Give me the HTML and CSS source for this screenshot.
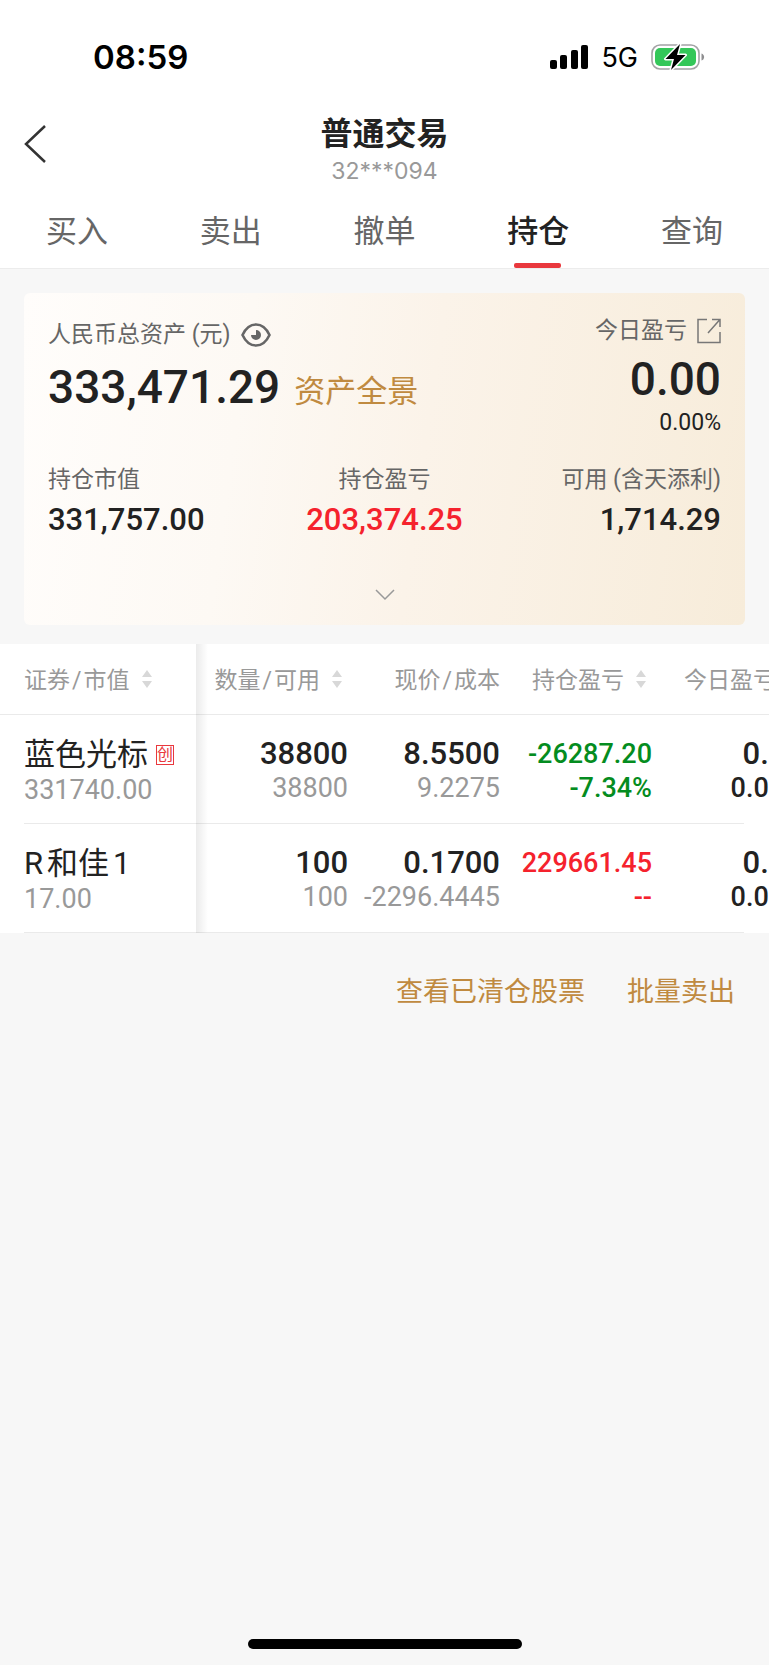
FILE: index.html
```html
<!DOCTYPE html>
<html lang="zh-CN">
<head>
  <meta charset="UTF-8">
  <meta name="viewport" content="width=device-width, initial-scale=1.0">
  <title>普通交易</title>
  <link rel="stylesheet" href="styles.css">
</head>
<body>
  <header class="top">
    <div class="status-bar">
      <span class="time">08:59</span>
      <div class="status-right">
        <svg class="signal" width="38" height="24" viewBox="0 0 38 24">
          <rect x="0" y="15" width="7" height="9" rx="2"/>
          <rect x="10" y="10" width="7" height="14" rx="2"/>
          <rect x="21" y="5" width="7" height="19" rx="2"/>
          <rect x="31" y="0" width="7" height="24" rx="2"/>
        </svg>
        <span class="network">5G</span>
        <svg class="battery" width="54" height="28" viewBox="0 0 54 28">
          <rect x="1" y="2" width="47" height="24" rx="8" fill="none" stroke="#a3a3a5" stroke-width="1.6"/>
          <rect x="4" y="5" width="41" height="18" rx="5" fill="#34c759"/>
          <path d="M50.500 10.500c3.500 1 3.500 6 0 7z" fill="#8e8e90"/>
          <path d="M29 1L14.500 16H23l-3 11L34.500 12H26z" fill="#000" stroke="#fff" stroke-width="3" stroke-linejoin="round" paint-order="stroke"/>
        </svg>
      </div>
    </div>

    <div class="title-bar">
      <button class="back" aria-label="返回">
        <svg width="24" height="40" viewBox="0 0 24 40"><path d="M21 2L2 20l19 18" fill="none" stroke="#333" stroke-width="2.500"/></svg>
      </button>
      <div class="title">
        <h1>普通交易</h1>
        <p>32***094</p>
      </div>
    </div>

    <nav class="tabs">
      <a href="#buy">买入</a>
      <a href="#sell">卖出</a>
      <a href="#cancel">撤单</a>
      <a href="#hold" class="active">持仓</a>
      <a href="#query">查询</a>
    </nav>
  </header>

  <main>
    <section class="card">
      <div class="card-top">
        <div class="total">
          <div class="label">
            人民币总资产 (元)
            <button aria-label="显示或隐藏金额">
              <svg width="30" height="24" viewBox="0 0 30 24">
                <path d="M1.500 12C8-2 22-2 28.500 12 22 26 8 26 1.500 12z" fill="none" stroke="#666" stroke-width="2.600"/>
                <path d="M15 7v5h-5a5 5 0 1 0 5-5z" fill="#666"/>
              </svg>
            </button>
          </div>
          <div class="amount">333,471.29 <a href="#overview">资产全景</a></div>
        </div>
        <div class="today">
          <div class="label">
            今日盈亏
            <button aria-label="查看今日盈亏">
              <svg width="24" height="26" viewBox="0 0 24 26" fill="none" stroke="#777" stroke-width="1.500">
                <path d="M10 1.500H1v23h22V14"/>
                <path d="M11 15L22.500 2M15 1.500h8V9"/>
              </svg>
            </button>
          </div>
          <div class="amount">0.00</div>
          <div class="rate">0.00%</div>
        </div>
      </div>

      <div class="stats">
        <div>
          <div class="label">持仓市值</div>
          <div class="value">331,757.00</div>
        </div>
        <div>
          <div class="label">持仓盈亏</div>
          <div class="value up">203,374.25</div>
        </div>
        <div>
          <div class="label">可用 (含天添利)</div>
          <div class="value">1,714.29</div>
        </div>
      </div>

      <button class="expand" aria-label="展开">
        <svg width="20" height="12" viewBox="0 0 20 12"><path d="M1 1l9 9 9-9" fill="none" stroke="#999" stroke-width="1.500"/></svg>
      </button>
    </section>

    <div class="table-wrap">
      <table>
        <thead>
          <tr>
            <th>证券<i>/</i>市值<svg class="sort" width="10" height="18" viewBox="0 0 10 18"><path d="M5 0l5 7H0zM0 11h10l-5 7z"/></svg></th>
            <th>数量<i>/</i>可用<svg class="sort" width="10" height="18" viewBox="0 0 10 18"><path d="M5 0l5 7H0zM0 11h10l-5 7z"/></svg></th>
            <th>现价<i>/</i>成本</th>
            <th>持仓盈亏<svg class="sort" width="10" height="18" viewBox="0 0 10 18"><path d="M5 0l5 7H0zM0 11h10l-5 7z"/></svg></th>
            <th>今日盈亏<svg class="sort" width="10" height="18" viewBox="0 0 10 18"><path d="M5 0l5 7H0zM0 11h10l-5 7z"/></svg></th>
          </tr>
        </thead>
        <tbody>
          <tr>
            <td><div class="name">蓝色光标<span class="tag">创</span></div><div class="sub">331740.00</div></td>
            <td><div class="num">38800</div><div class="sub">38800</div></td>
            <td><div class="num">8.5500</div><div class="sub">9.2275</div></td>
            <td class="down"><div class="profit">-26287.20</div><div class="profit">-7.34%</div></td>
            <td><div class="num">0.00</div><div class="profit">0.00%</div></td>
          </tr>
          <tr>
            <td><div class="name">R<i>和佳</i>1</div><div class="sub">17.00</div></td>
            <td><div class="num">100</div><div class="sub">100</div></td>
            <td><div class="num">0.1700</div><div class="sub">-2296.4445</div></td>
            <td class="up"><div class="profit">229661.45</div><div class="profit">--</div></td>
            <td><div class="num">0.00</div><div class="profit">0.00%</div></td>
          </tr>
        </tbody>
      </table>
    </div>

    <div class="links">
      <a href="#cleared">查看已清仓股票</a>
      <a href="#batch">批量卖出</a>
    </div>
  </main>

  <div class="home-indicator"></div>
</body>
</html>
```
FILE: styles.css
```css
* {
  box-sizing: border-box;
}
body {
  margin: 0;
  min-height: 100vh;
  display: flex;
  flex-direction: column;
  font-family: Roboto, "Noto Sans CJK SC", sans-serif;
  color: #222;
  background-color: #f7f7f7;
}
h1, p {
  margin: 0;
}
a {
  text-decoration: none;
  color: #c08a40;
}
i {
  font-style: normal;
}
button {
  display: flex;
  padding: 0;
  border: none;
  background: none;
  cursor: pointer;
}
.up {
  color: #f5222d;
}
.down {
  color: #048c20;
}

/* header */
.top {
  background-color: white;
  border-bottom: 1px solid #ececec;
}
.status-bar {
  height: 112px;
  padding: 2px 64px 0 93px;
  display: flex;
  justify-content: space-between;
  align-items: center;
  font-family: Inter, sans-serif;
  color: black;
}
.time {
  font-size: 33px;
  font-weight: 600;
}
.status-right {
  display: flex;
  align-items: center;
  gap: 13px;
}
.network {
  font-size: 27px;
}
.title-bar {
  position: relative;
  text-align: center;
}
.back {
  position: absolute;
  left: 24px;
  top: 12px;
}
h1 {
  font-size: 32px;
  font-weight: 700;
  line-height: 44px;
}
.title p {
  font-family: Inter, sans-serif;
  font-size: 23px;
  line-height: 30px;
  color: #999;
}
.tabs {
  display: flex;
}
.tabs a {
  position: relative;
  flex: 1;
  height: 82px;
  line-height: 92px;
  text-align: center;
  font-size: 31px;
  color: #666;
}
.tabs .active {
  color: #222;
  font-weight: 500;
}
.tabs .active::after {
  content: "";
  position: absolute;
  left: 50%;
  bottom: 0;
  width: 47px;
  height: 5px;
  margin-left: -24px;
  border-radius: 2px;
  background-color: #e9383d;
}

/* asset card */
.card {
  margin: 24px 24px 19px;
  padding: 21px 24px 0;
  border-radius: 6px;
  background: linear-gradient(98deg, #fffdfb, #fdf9f4 30%, #fbf3e9 55%, #f7ecda);
}
.card-top {
  display: flex;
  justify-content: space-between;
}
.label {
  display: flex;
  align-items: center;
  gap: 10px;
  font-size: 23px;
  line-height: 32px;
  color: #666;
}
.total .label {
  line-height: 42px;
}
.today .label {
  line-height: 34px;
}
.today {
  display: flex;
  flex-direction: column;
  align-items: flex-end;
}
.amount {
  display: flex;
  align-items: center;
  gap: 14px;
  font-size: 46px;
  font-weight: 500;
  line-height: 62px;
}
.amount a {
  padding-top: 10px;
  font-size: 31px;
  font-weight: 400;
  line-height: 42px;
}
.rate {
  font-size: 23px;
  line-height: 26px;
}
.stats {
  display: grid;
  grid-template-columns: 1fr 1fr 1fr;
  margin-top: 28px;
}
.stats > div {
  display: flex;
  flex-direction: column;
  align-items: center;
}
.stats > div:first-child {
  align-items: flex-start;
}
.stats > div:last-child {
  align-items: flex-end;
}
.value {
  font-size: 31px;
  font-weight: 500;
  line-height: 48px;
}
.expand {
  width: 100%;
  height: 60px;
  margin-top: 21px;
  justify-content: center;
  align-items: center;
}

/* holdings */
.table-wrap {
  overflow: hidden;
  background-color: white;
}
table {
  width: calc(100% + 35px);
  table-layout: fixed;
  border-collapse: collapse;
  text-align: right;
  white-space: nowrap;
}
tr {
  height: 109px;
  background: linear-gradient(#eaeaea, #eaeaea) no-repeat 24px 100% / calc(100% - 84px) 1px;
}
thead tr {
  height: 71px;
  background-position: 0 100%;
  background-size: 100% 1px;
}
th {
  padding: 0 0 4px;
  font-size: 23px;
  font-weight: 400;
  color: #999;
}
td {
  padding: 2px 0 0;
}
th i {
  margin: 0 2px;
}
th:first-child, td:first-child {
  position: relative;
  width: 196px;
  padding-left: 24px;
  text-align: left;
}
td:first-child {
  padding-top: 4px;
}
th:first-child::after, td:first-child::after {
  content: "";
  position: absolute;
  left: 100%;
  top: 0;
  bottom: 0;
  width: 12px;
  background: linear-gradient(90deg, rgba(0, 0, 0, 0.08), rgba(0, 0, 0, 0));
}
.sort {
  margin: 0 6px 0 12px;
  fill: #d8d8d8;
}
.name {
  display: flex;
  align-items: center;
  font-size: 31px;
  line-height: 36px;
}
.name i {
  margin: 0 4px;
}
.tag {
  margin-left: 8px;
  border: 1px solid #e9383d;
  font-size: 16px;
  line-height: 18px;
  color: #e9383d;
}
.num {
  font-size: 31px;
  font-weight: 500;
  line-height: 34px;
}
.sub {
  font-size: 27px;
  line-height: 34px;
  color: #999;
}
.profit {
  font-size: 27px;
  font-weight: 500;
  line-height: 34px;
}

.links {
  display: flex;
  justify-content: flex-end;
  gap: 42px;
  padding: 41px 34px;
  font-size: 27px;
  line-height: 36px;
}
.home-indicator {
  width: 274px;
  height: 10px;
  margin: auto auto 16px;
  border-radius: 5px;
  background-color: black;
}
```
